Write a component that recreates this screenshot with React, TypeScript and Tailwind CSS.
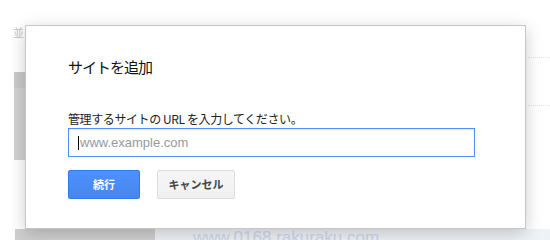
import React from "react";

const jp = "font-['Noto_Sans_CJK_JP','Liberation_Sans',sans-serif]";

function Backdrop() {
  // faded page that sits under the modal
  return (
    <div className="absolute inset-0 flex flex-col pt-[25px]">
      <div className="flex justify-between">
        <div className="pl-[13px] flex flex-col gap-[33px]">
          <span className={`text-[11px] leading-[14px] text-[#c4c4c4] ${jp}`}>並</span>
          <div className="ml-[1px] w-[12px] h-[88px] bg-[#d2d2d2]">
            <div className="h-[16px] bg-[#c9c9c9]" />
          </div>
        </div>
        <div className="w-[22px] flex flex-col gap-[47px] pt-[32px]">
          <div className="border-t border-dotted border-[#e2e2e2]" />
          <div className="border-t border-dotted border-[#e2e2e2]" />
        </div>
      </div>
      <div className="mt-auto flex h-[11px] pl-[15px]">
        <div className="w-[140px] bg-[#cfcfcf]" />
        <div className="flex-1 bg-[#eef1f5] pl-[38px] overflow-hidden">
          <span className="block text-[17px] leading-[17px] text-[#cdd6ea] font-['Liberation_Sans',sans-serif] whitespace-nowrap">
            www.0168.rakuraku.com
          </span>
        </div>
      </div>
    </div>
  );
}

export default function App() {
  return (
    <div className="relative w-[550px] h-[240px] overflow-hidden bg-white">
      <Backdrop />

      <div className="relative pt-[25px] pl-[25px]">
        <div className="w-[501px] h-[204px] bg-white border border-[#c5c5c5] shadow-[0_4px_16px_rgba(0,0,0,0.2)] pl-[42px] pt-[31px]">
          <h2 className={`text-[15px] leading-[20px] tracking-[-1px] font-normal text-[#111] ${jp}`}>サイトを追加</h2>
          <p className={`mt-[33px] text-[12px] leading-[17px] tracking-[-0.4px] text-[#222] ${jp}`}>
            管理するサイトの&nbsp;URL&nbsp;を入力してください。
          </p>
          <div className="relative mt-[1px] w-[407px]">
            <input
              type="text"
              placeholder="www.example.com"
              className="w-full h-[29px] border border-[#4d90fe] px-[11px] text-[13px] text-[#222] placeholder:text-[#999] outline-none shadow-[inset_0_1px_2px_rgba(0,0,0,0.1)] font-['Liberation_Sans',sans-serif]"
            />
            <span className="absolute left-[10px] top-[8px] w-px h-[14px] bg-black" />
          </div>
          <div className="flex gap-[17px] mt-[13px]">
            <button className={`w-[72px] h-[29px] rounded-[2px] border border-[#3079ed] bg-gradient-to-b from-[#4d90fe] to-[#4787ed] text-white text-[11px] font-bold ${jp}`}>
              続行
            </button>
            <button className={`w-[78px] h-[29px] rounded-[2px] border border-[#dcdcdc] bg-gradient-to-b from-[#f5f5f5] to-[#f1f1f1] text-[#444] text-[11px] font-bold ${jp}`}>
              キャンセル
            </button>
          </div>
        </div>
      </div>
    </div>
  );
}
